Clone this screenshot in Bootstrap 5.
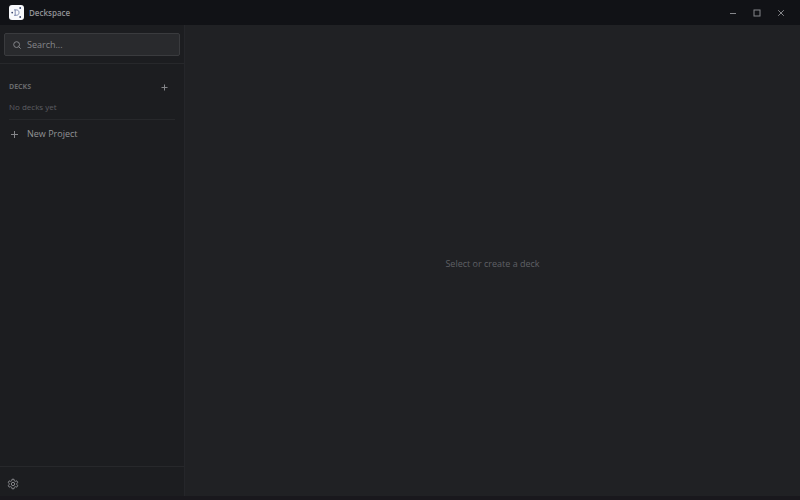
<!DOCTYPE html>
<html lang="en" data-bs-theme="dark">
<head>
<meta charset="utf-8">
<meta name="viewport" content="width=device-width, initial-scale=1">
<title>Deckspace</title>
<link href="https://cdn.jsdelivr.net/npm/bootstrap@5.3.0/dist/css/bootstrap.min.css" rel="stylesheet">
<style>
  body { font-family: "Open Sans", "Noto Sans", sans-serif; font-size: 9px; line-height: 12px; background: #202124; color: #85868a; }
  svg { display: block; fill: none; }
  .line-icon { stroke: currentColor; }
  .btn { font-size: 9px; line-height: 12px; color: #85868a; }
  .titlebar { height: 25px; background: #111216; padding: 0 7px 0 9px; }
  .app-name { font-size: 8px; font-weight: 600; color: #929396; padding-left: 5px; }
  .win-btn { width: 24px; height: 25px; }
  .sidebar { width: 185px; background: #1c1d20; border-right: 1px solid #25262a; }
  .search-area { padding: 8px 4px 7px; border-bottom: 1px solid #27282b; }
  .search-box { height: 23px; padding: 0 8px; gap: 6px; background: #292a2d; border: 1px solid #3a3b3e; border-radius: 2px; }
  .search-box input { background: none; border: 0; outline: 0; padding: 0; color: #b0b1b4; min-width: 0; }
  .search-box input::placeholder { color: #858689; opacity: 1; }
  .deck-area { padding: 15px 9px 0; }
  .deck-head { height: 16px; padding-right: 6px; }
  .deck-title { font-size: 7px; font-weight: 700; line-height: 12px; color: #68696c; }
  .empty-note { font-size: 8px; color: #5d5e62; padding: 6px 0; border-bottom: 1px solid #27282b; }
  .new-project { height: 28px; gap: 8px; padding-left: 1px; }
  .new-project span { font-weight: 500; color: #929396; }
  .side-foot { height: 30px; padding: 5px 0 0 7px; border-top: 1px solid #27282b; }
  .prompt-text { font-weight: 500; color: #5f6064; padding-top: 6px; }
  .bottom-edge { height: 4px; background: #19181d; }
</style>
<script src="https://cdn.jsdelivr.net/npm/bootstrap@5.3.0/dist/js/bootstrap.bundle.min.js"></script>
</head>
<body class="vh-100 d-flex flex-column overflow-hidden">
<header class="titlebar d-flex align-items-center flex-shrink-0">
  <svg width="15" height="15" viewBox="0 0 15 15" aria-hidden="true">
    <rect width="15" height="15" rx="3" fill="#f8f9fc"/>
    <path d="M5 4.900h2.200c1.800 0 2.800 1 2.800 2.700s-1 2.700-2.800 2.700H5M6.200 4.900v5.400" stroke="#6573a0" stroke-width=".8"/>
    <g fill="#38456f"><circle cx="3.200" cy="7.600" r=".9"/><circle cx="11.200" cy="3" r=".9"/><circle cx="11.200" cy="12" r=".9"/></g>
  </svg>
  <span class="app-name me-auto">Deckspace</span>
  <button class="win-btn btn border-0 p-0 d-flex align-items-center justify-content-center" aria-label="Minimize"><svg class="line-icon" width="8" height="8" viewBox="0 0 8 8"><path d="M1 4.500h6"/></svg></button>
  <button class="win-btn btn border-0 p-0 d-flex align-items-center justify-content-center" aria-label="Maximize"><svg class="line-icon" width="8" height="8" viewBox="0 0 8 8"><rect x="1" y="1" width="6" height="6"/></svg></button>
  <button class="win-btn btn border-0 p-0 d-flex align-items-center justify-content-center" aria-label="Close"><svg class="line-icon" width="8" height="8" viewBox="0 0 8 8"><path d="M1.200 1.200l5.600 5.600M6.800 1.200L1.200 6.800"/></svg></button>
</header>
<div class="d-flex flex-grow-1">
  <aside class="sidebar d-flex flex-column flex-shrink-0">
    <div class="search-area">
      <label class="search-box d-flex align-items-center">
        <svg class="line-icon" width="8" height="8" viewBox="0 0 8 8" aria-hidden="true"><circle cx="3.600" cy="3.600" r="2.900"/><path d="M5.700 5.700l2 2"/></svg>
        <input class="flex-grow-1" type="text" placeholder="Search..." aria-label="Search">
      </label>
    </div>
    <nav class="deck-area flex-grow-1">
      <div class="deck-head d-flex align-items-center justify-content-between">
        <h2 class="deck-title m-0">DECKS</h2>
        <button class="btn border-0 p-0" aria-label="Add deck"><svg class="line-icon" width="9" height="9" viewBox="0 0 9 9"><path d="M1.500 4.500h6M4.500 1.500v6"/></svg></button>
      </div>
      <p class="empty-note m-0">No decks yet</p>
      <button class="new-project btn border-0 py-0 pe-0 d-flex align-items-center w-100"><svg class="line-icon" width="9" height="9" viewBox="0 0 9 9"><path d="M1 4.500h7M4.500 1v7"/></svg><span>New Project</span></button>
    </nav>
    <div class="side-foot d-flex align-items-center">
      <button class="btn border-0 p-0" aria-label="Settings"><svg class="line-icon" width="12" height="12" viewBox="0 0 24 24" stroke-width="2" stroke-linejoin="round"><path d="M10 2.500h4l.6 3 2 1.200 3-1 2 3.500-2.300 2v1.600l2.300 2-2 3.500-3-1-2 1.200-.6 3h-4l-.6-3-2-1.200-3 1-2-3.500 2.300-2v-1.600l-2.300-2 2-3.500 3 1 2-1.200z"/><circle cx="12" cy="12" r="3.300"/></svg></button>
    </div>
  </aside>
  <main class="flex-grow-1 d-flex align-items-center justify-content-center">
    <p class="prompt-text m-0">Select or create a deck</p>
  </main>
</div>
<div class="bottom-edge flex-shrink-0"></div>
</body>
</html>
